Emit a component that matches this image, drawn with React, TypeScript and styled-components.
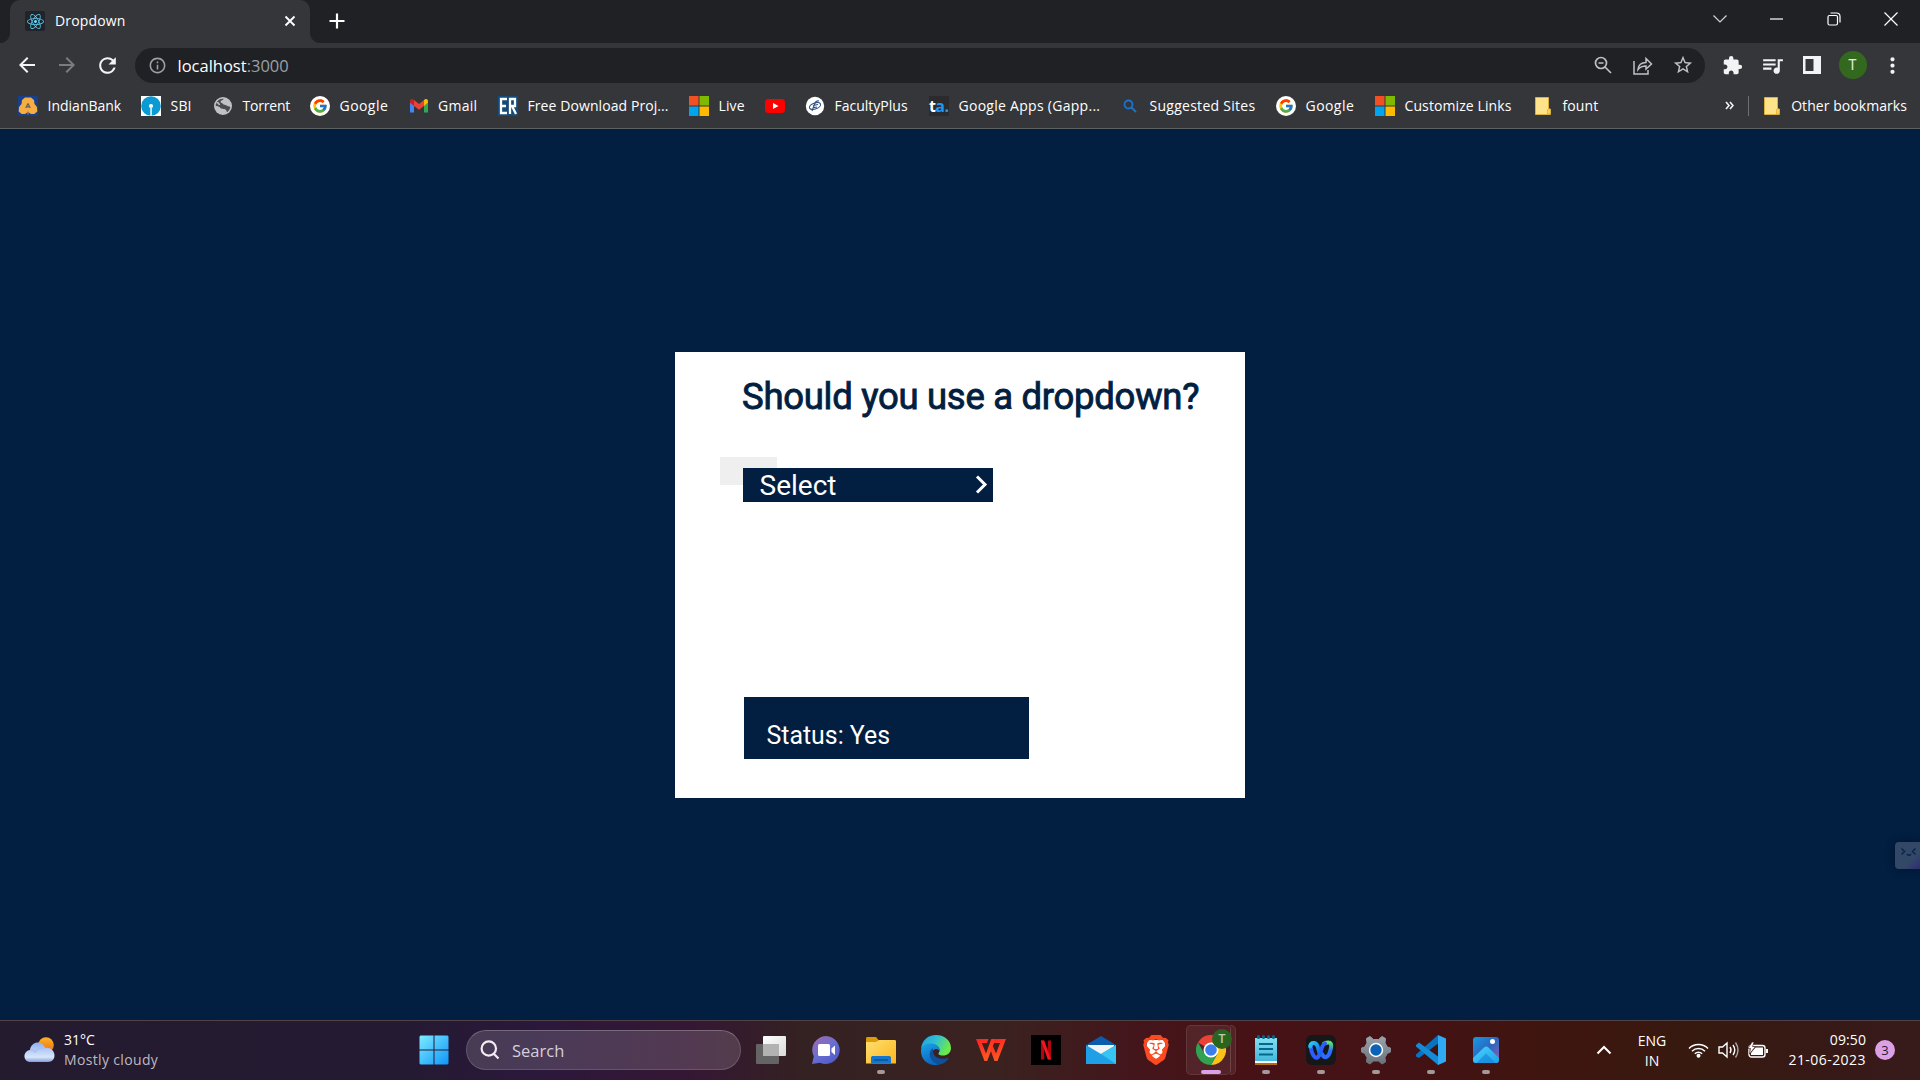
import React from "react";
import styled, { createGlobalStyle } from "styled-components";
import {
  MdArrowBack,
  MdArrowForward,
  MdRefresh,
  MdExtension,
  MdStarOutline,
  MdQueueMusic,
  MdMoreVert,
  MdInfoOutline,
} from "react-icons/md";
import { FcGoogle } from "react-icons/fc";
import { FaReact } from "react-icons/fa";
import { SiBrave } from "react-icons/si";

const ui = `"Segoe UI", "Open Sans", "Noto Sans", sans-serif`;
const navy = "#021e40";

const GlobalStyle = createGlobalStyle`
  *, *::before, *::after { box-sizing: border-box; }
  html, body { margin: 0; padding: 0; background: ${navy}; }
  body { overflow: hidden; }
  svg { display: block; flex: none; }
`;

const Screen = styled.div`
  width: 1920px;
  height: 1080px;
  display: flex;
  flex-direction: column;
  overflow: hidden;
  background: ${navy};
  font-family: ${ui};
`;

/* ---------- browser chrome ---------- */

const TabStrip = styled.header`
  height: 43px;
  flex: none;
  display: flex;
  background: #202124;
  padding-left: 10px;
`;

const Tab = styled.div`
  position: relative;
  width: 300px;
  height: 43px;
  display: flex;
  align-items: center;
  padding: 0 12px 1px 15px;
  gap: 10px;
  background: #35363a;
  border-radius: 10px 10px 0 0;
  color: #fff;
  &::before,
  &::after {
    content: "";
    position: absolute;
    bottom: 0;
    width: 10px;
    height: 10px;
  }
  &::before {
    left: -10px;
    background: radial-gradient(circle at 0 0, #202124 9.5px, #35363a 10.5px);
  }
  &::after {
    right: -10px;
    background: radial-gradient(circle at 100% 0, #202124 9.5px, #35363a 10.5px);
  }
`;

const Label = styled.span<{ $size?: number; $spacing?: number; $color?: string }>`
  font-size: ${(p) => p.$size ?? 14}px;
  letter-spacing: ${(p) => p.$spacing ?? 0}px;
  color: ${(p) => p.$color ?? "#fff"};
  line-height: 20px;
  white-space: nowrap;
`;

const TabTitle = styled(Label)`
  flex: 1;
`;

const Favicon = styled.span`
  width: 20px;
  height: 20px;
  display: grid;
  place-items: center;
  border-radius: 2px;
  background: #20232a;
  color: #61dafb;
`;

const CloseSlot = styled.span`
  width: 16px;
  display: grid;
  place-items: center;
`;

const NewTab = styled.span`
  width: 54px;
  display: grid;
  place-items: center;
  padding-bottom: 1px;
`;

const WindowControls = styled.div`
  margin-left: auto;
  margin-right: 1px;
  display: flex;
  height: 38px;
`;

const WindowButton = styled.span`
  width: 57px;
  display: grid;
  place-items: center;
`;

const Toolbar = styled.div`
  height: 43px;
  flex: none;
  display: flex;
  align-items: center;
  padding: 1px 8px 0 7px;
  background: #35363a;
`;

const NavButton = styled.span<{ $dim?: boolean }>`
  width: 40px;
  display: grid;
  place-items: center;
  color: ${(p) => (p.$dim ? "#7b7c80" : "#f1f3f4")};
`;

const Omnibox = styled.div`
  width: 1570px;
  height: 35px;
  margin-left: 8px;
  margin-right: 7px;
  border-radius: 18px;
  background: #202124;
  display: flex;
  align-items: center;
  padding: 0 2px 0 13px;
  color: #9aa0a6;
`;

const Url = styled.span`
  flex: 1;
  padding-left: 10.5px;
  padding-top: 1px;
  font-size: 16.5px;
  line-height: 24px;
  color: #9aa0a6;
  b {
    font-weight: 400;
    color: #fff;
  }
`;

const OmniAction = styled.span`
  width: 40px;
  display: grid;
  place-items: center;
  color: #bdc1c6;
`;

const Avatar = styled.span`
  width: 28px;
  height: 28px;
  margin-left: 1px;
  border-radius: 50%;
  display: grid;
  place-items: center;
  background: #33691e;
  color: #e3ebe0;
  font: 14px/28px Roboto, sans-serif;
`;

const Bookmarks = styled.nav`
  height: 43px;
  flex: none;
  display: flex;
  align-items: center;
  padding: 0 13px 3px 18px;
  background: #35363a;
  border-bottom: 1px solid #5f6064;
`;

const Bookmark = styled.span<{ $width?: number }>`
  width: ${(p) => (p.$width ? `${p.$width}px` : "auto")};
  display: flex;
  align-items: center;
  gap: 9.5px;
`;

const IconSlot = styled.span`
  width: 20px;
  height: 20px;
  flex: none;
  display: grid;
  place-items: center;
`;

const WhiteDisc = styled(IconSlot)`
  background: #fff;
  border-radius: 50%;
`;

const Overflow = styled.span`
  margin-left: auto;
  display: flex;
  align-items: center;
`;

const Divider = styled.i`
  width: 1px;
  height: 20px;
  margin: 0 13px 0 14px;
  background: #6f7074;
`;

/* ---------- page ---------- */

const Page = styled.main`
  position: relative;
  flex: 1;
  padding-top: 223px;
  background: ${navy};
`;

const Card = styled.section`
  width: 570px;
  height: 446px;
  margin-left: 675px;
  padding: 21px 0 0 45px;
  background: #fff;
  font-family: Roboto, sans-serif;
`;

const Heading = styled.h1`
  margin: 0 0 36px 22px;
  font-size: 36.5px;
  line-height: 48px;
  font-weight: 400;
  letter-spacing: -0.29px;
  -webkit-text-stroke: 0.9px ${navy};
  color: ${navy};
  white-space: nowrap;
`;

const ButtonStub = styled.div`
  width: 57px;
  height: 28px;
  padding: 11px 0 0 23px;
  background: #efefef;
`;

const SelectBox = styled.div`
  width: 250px;
  height: 34px;
  display: flex;
  align-items: center;
  justify-content: space-between;
  padding: 0 5px 0 16.5px;
  background: ${navy};
  color: #fff;
  font-size: 28px;
  line-height: 36px;
`;

const SelectText = styled.span`
  padding-top: 2px;
`;

const SelectArrow = styled.span`
  padding-bottom: 1px;
`;

const Status = styled.div`
  width: 285px;
  height: 62px;
  margin: 212px 0 0 24px;
  padding: 24px 0 0 22.5px;
  background: ${navy};
  color: #fff;
  font-size: 24.9px;
  line-height: 30px;
`;

const SideWidget = styled.div`
  position: absolute;
  right: 0;
  top: 713px;
  width: 25px;
  height: 27px;
  padding: 5px 0 0 5px;
  border-radius: 4px 0 0 4px;
  background: linear-gradient(135deg, #334867 65%, #2f2d73);
  box-shadow: 0 0 8px rgba(0, 10, 30, 0.4);
`;

/* ---------- taskbar ---------- */

const Taskbar = styled.footer`
  height: 60px;
  flex: none;
  display: flex;
  align-items: center;
  padding-bottom: 1px;
  border-top: 1px solid #514247;
  background: linear-gradient(
    90deg,
    #241b2f 0,
    #241a32 400px,
    #2b183b 540px,
    #351734 690px,
    #342122 800px,
    #3a2220 1000px,
    #43161c 1130px,
    #471216 1240px,
    #431214 1420px,
    #3f150f 1540px,
    #36190f 1700px,
    #371a1b 1920px
  );
`;

const Weather = styled.div`
  width: 406px;
  display: flex;
  align-items: center;
  gap: 9px;
  padding-left: 24px;
`;

const Stack = styled.div<{ $align?: string }>`
  display: flex;
  flex-direction: column;
  text-align: ${(p) => p.$align ?? "left"};
`;

const Slot = styled.div`
  position: relative;
  width: 55px;
  height: 58px;
  flex: none;
  display: grid;
  place-items: center;
`;

const Indicator = styled.i<{ $active?: boolean }>`
  position: absolute;
  bottom: 5px;
  left: 50%;
  width: ${(p) => (p.$active ? 20 : 8)}px;
  height: 4px;
  transform: translateX(-50%);
  border-radius: 2px;
  background: ${(p) => (p.$active ? "#dca0e6" : "#a5989a")};
`;

const SearchBox = styled.div`
  width: 275px;
  height: 40px;
  margin: 0 2px 0 5px;
  display: flex;
  align-items: center;
  gap: 12px;
  padding-left: 13px;
  border: 1px solid rgba(255, 255, 255, 0.14);
  border-top-color: rgba(255, 255, 255, 0.24);
  border-radius: 20px;
  background: rgba(255, 255, 255, 0.15);
`;

const SearchLabel = styled(Label)`
  padding-top: 2px;
`;

const ActiveSlot = styled(Slot)`
  &::before,
  &::after {
    content: "";
    position: absolute;
    top: 4px;
    height: 50px;
    border: 1px solid rgba(255, 255, 255, 0.09);
    border-radius: 5px;
    background: rgba(255, 255, 255, 0.07);
  }
  &::before {
    left: 3px;
    width: 45px;
  }
  &::after {
    left: 47px;
    width: 6px;
    border-left: 0;
    border-radius: 0 5px 5px 0;
  }
  > svg {
    position: relative;
  }
`;

const ProfileBadge = styled.span`
  position: absolute;
  z-index: 1;
  left: 29px;
  top: 8px;
  width: 20px;
  height: 20px;
  border-radius: 50%;
  background: #2b641e;
  color: #b9cdb3;
  text-align: center;
  font: 500 12px/20px Roboto, sans-serif;
`;

const Tray = styled.div`
  margin-left: auto;
  display: flex;
  align-items: center;
  padding-right: 25px;
`;

const Language = styled(Stack)`
  width: 50px;
  margin: 1px 11px 0 15px;
`;

const TrayIcons = styled.div`
  display: flex;
  align-items: center;
  gap: 9px;
`;

const Clock = styled(Stack)`
  width: 90px;
  margin-left: 8px;
`;

const Count = styled.span`
  width: 20px;
  height: 20px;
  margin-left: 9px;
  border-radius: 50%;
  background: #dca0e6;
  color: #2c1830;
  text-align: center;
  font-size: 13px;
  line-height: 20px;
`;

/* ---------- drawings ---------- */

const Lines = ({ d, w, h = w, sw = 1.4, color = "currentColor" }: { d: string; w: number; h?: number; sw?: number; color?: string }) => (
  <svg width={w} height={h} viewBox={`0 0 ${w} ${h}`} fill="none" stroke={color} strokeWidth={sw}>
    <path d={d} />
  </svg>
);

const IndianBankIcon = () => (
  <svg width="20" height="20" viewBox="0 0 20 20">
    <path d="M0 0h20v20H0z" fill="#173f8e" />
    <path d="M7 1.500h6l3 2.500.5 4 2.500 3 .3 4.500-3 2.500H13l-3-2-3 2H3.700l-3-2.500L1 11l2.500-3L4 4z" fill="#f5ae42" />
    <path d="M10 7.500l-2.200 4.500M10 7.500l2.200 4.500M9 10.800h2" fill="none" stroke="#6a5a5a" strokeWidth="1.200" />
    <path d="M10 18.500v-4" stroke="#c98d3a" strokeWidth="1" />
  </svg>
);

const SbiIcon = () => (
  <svg width="20" height="20" viewBox="0 0 20 20">
    <path d="M0 0h20v20H0z" fill="#fff" />
    <circle cx="10" cy="10" r="9.800" fill="#0a9bd3" />
    <circle cx="10" cy="10" r="2.100" fill="#fff" />
    <path d="M9.200 10h1.700v10H9.200z" fill="#d8f0fa" />
  </svg>
);

const GlobeIcon = () => (
  <svg width="20" height="20" viewBox="0 0 20 20">
    <circle cx="10" cy="10" r="9" fill="#bfc1c5" />
    <path d="M11 2.800c-1 1.500-3 1.200-3.500 3 0 1.500 2 1 2.500 2.200s2.500.5 3.500 1.500 2.500.5 3.800 1.500c-.3 2-1.500 4-3.300 5.200-.5-1.500-1-2.700-2.500-3.200-1.500-.3-3 .2-4-1-1.200-1.500-3-2-4.800-2C2.700 5.500 6.500 2 11 2.800z" fill="#4b4c50" />
    <path d="M3.500 6.500c1.500 0 2.500 1 3 2.500M5 14c2 0 3.500.5 5 3" fill="none" stroke="#bfc1c5" strokeWidth="1.500" />
  </svg>
);

const GmailIcon = () => (
  <svg width="20" height="20" viewBox="0 0 20 20">
    <path d="M1 5v11.500h4V9L1 5z" fill="#4285f4" />
    <path d="M19 5v11.500h-4V9l4-4z" fill="#34a853" />
    <path d="M1 6.500V5c0-1.800 2-2.500 3.200-1.500L5 4.100V10z" fill="#c5221f" />
    <path d="M19 6.500V5c0-1.800-2-2.500-3.200-1.500l-.8.6V10z" fill="#fbbc04" />
    <path d="M5 4.100l5 3.800 5-3.800V10l-5 3.800L5 10z" fill="#ea4335" />
  </svg>
);

const ErIcon = () => (
  <svg width="20" height="20" viewBox="0 0 20 20">
    <path d="M0 0h20v20H0z" fill="#164a78" />
    <path d="M9 3H3v14h6M3 10h5M12 18V3h5v7h-5M14 10l4 8" fill="none" stroke="#fff" strokeWidth="2.300" />
  </svg>
);

const MicrosoftIcon = () => (
  <svg width="20" height="20" viewBox="0 0 20 20">
    <path d="M0 0h9.500v9.500H0z" fill="#f25022" />
    <path d="M10.500 0H20v9.500h-9.500z" fill="#7fba00" />
    <path d="M0 10.500h9.500V20H0z" fill="#00a4ef" />
    <path d="M10.500 10.500H20V20h-9.500z" fill="#ffb900" />
  </svg>
);

const YoutubeIcon = () => (
  <svg width="20" height="20" viewBox="0 0 20 20">
    <rect y="3" width="20" height="14" rx="3.500" fill="#f00" />
    <path d="M8 7l5.500 3L8 13z" fill="#fff" />
  </svg>
);

const FacultyIcon = () => (
  <svg width="20" height="20" viewBox="0 0 20 20">
    <circle cx="10" cy="10" r="9.200" fill="#fff" />
    <g fill="none" stroke="#2d4f86" strokeWidth="1.100">
      <ellipse cx="10" cy="10" rx="5.800" ry="3" transform="rotate(-20 10 10)" />
      <path d="M7 15l3-8c.7-2 2-2.500 4-2M8 9.500l5-1M8 11.800l4-.8" />
    </g>
  </svg>
);

const TaTile = styled(IconSlot)`
  background: #2b2b2d;
  color: #fff;
  font: 700 16px/18px "Open Sans", sans-serif;
  letter-spacing: -0.6px;
  display: flex;
  span {
    color: #2196f3;
  }
`;

const FolderIcon = () => (
  <svg width="20" height="20" viewBox="0 0 20 20">
    <path d="M2.500 1.500h13V13h1.800v5.500H2.500z" fill="#ffe38a" stroke="#dcb13b" />
    <path d="M14.500 18v-4.500l1.500-.7 1.300.7V18z" fill="#ffd55c" stroke="#dcb13b" strokeWidth=".8" />
  </svg>
);

const CloudIcon = () => (
  <svg width="31" height="28" viewBox="0 0 31 28">
    <defs>
      <linearGradient id="sun" x2="0" y2="1"><stop stopColor="#fbb425" /><stop offset="1" stopColor="#ee6a16" /></linearGradient>
      <linearGradient id="cloud" x2="0" y2="1"><stop stopColor="#8fb0ee" /><stop offset=".75" stopColor="#d9e5fa" /><stop offset="1" stopColor="#7d9fdc" /></linearGradient>
    </defs>
    <circle cx="22" cy="9" r="7.800" fill="url(#sun)" />
    <path d="M6.500 26C-1.500 26-1.500 15 6 14 7 4.500 19 4 21 12c11-2 13 14 3 14z" fill="url(#cloud)" />
    <path d="M6 14c2-.5 4 .5 5 2 2-3 5-4.500 10-4" fill="none" stroke="#a8c1f1" strokeWidth="1.500" />
  </svg>
);

const StartIcon = () => (
  <svg width="30" height="30" viewBox="0 0 30 30">
    <defs>
      <linearGradient id="win" x2="1" y2="1"><stop stopColor="#7cecff" /><stop offset="1" stopColor="#0e94fa" /></linearGradient>
    </defs>
    <path fill="url(#win)" d="M1.500.5H14.500v14H.5V1.500zM15.500.5h13l1 1v13h-14zM.5 15.500h14v14h-13l-1-1zM15.500 15.500h14v13l-1 1h-13z" />
  </svg>
);

const TaskViewIcon = () => (
  <svg width="30" height="28" viewBox="0 0 30 28">
    <defs><linearGradient id="tv" x2="1" y2="1"><stop stopColor="#fff" /><stop offset="1" stopColor="#d9d9d9" /></linearGradient></defs>
    <rect y="8" width="23" height="20" rx="1" fill="#646464" />
    <rect x="7" width="23" height="20" rx="1" fill="url(#tv)" />
    <path d="M7 8h16v12H7z" fill="#b2b2b2" />
  </svg>
);

const ChatIcon = () => (
  <svg width="30" height="30" viewBox="0 0 30 30">
    <defs><linearGradient id="chat" x2=".8" y2="1"><stop stopColor="#a667a8" /><stop offset=".5" stopColor="#6c6fd0" /><stop offset="1" stopColor="#5059c9" /></linearGradient></defs>
    <path d="M15 1a14 14 0 1 1-6 26.800L1 29l1.800-7.500A14 14 0 0 1 15 1z" fill="url(#chat)" />
    <rect x="7" y="9" width="12" height="12" rx="1.500" fill="#fff" />
    <path d="M20.500 13.500L24 10.500v9.500l-3.500-3z" fill="#fff" />
  </svg>
);

const ExplorerIcon = () => (
  <svg width="30" height="30" viewBox="0 0 30 30">
    <defs><linearGradient id="folder" x2="1" y2="1"><stop stopColor="#ffdf72" /><stop offset="1" stopColor="#fcb51c" /></linearGradient></defs>
    <path d="M0 3.500C0 2.500.5 2 1.500 2H10l3 3.500V8H0z" fill="#dc9b07" />
    <path d="M0 7h10l3-2h15.500c1 0 1.500.5 1.500 1.500V28.500H0z" fill="url(#folder)" />
    <path d="M5 28.500V23c0-1.500 1-2 2-2h16c1 0 2 .5 2 2v5.500z" fill="#1476cd" />
    <path d="M8 25h14" stroke="#084b8e" strokeWidth="1.300" />
  </svg>
);

const EdgeIcon = () => (
  <svg width="30" height="30" viewBox="0 0 30 30">
    <defs>
      <linearGradient id="edgeTop" x2="1" y2=".4"><stop stopColor="#1f9fe0" /><stop offset=".5" stopColor="#30bed4" /><stop offset="1" stopColor="#6bea4a" /></linearGradient>
      <linearGradient id="edgeLeft" x2=".4" y2="1"><stop stopColor="#1ca4e8" /><stop offset="1" stopColor="#0a67c0" /></linearGradient>
    </defs>
    <path d="M0 14C1 5 7 0 15 0c9 0 15 6 15 13 0 5-4 7.500-8 7.500-4 0-5.500-1.500-4-3 1.500-2 .5-7-5-8C7 8.500 2 10 0 14z" fill="url(#edgeTop)" />
    <path d="M0 15C1 9 7 8 11 8.500c5 .5 8 4 7.500 7.500-2-4-8-2-8 4 0 5 3 8 8 9.500C8 32-.5 25 0 15z" fill="url(#edgeLeft)" />
    <path d="M12 13c-6 4-4 14 6 16.500 4 0 8-3 10-7-6 3-16 1-16-6.500 0-1 0-2 0-3z" fill="#0d509b" />
  </svg>
);

const WpsIcon = () => (
  <svg width="30" height="24" viewBox="0 0 30 24">
    <defs><linearGradient id="wps" x2=".4" y2="1"><stop stopColor="#ff1d22" /><stop offset="1" stopColor="#ff5a22" /></linearGradient></defs>
    <path d="M0 1h12.500l-1.500 4H5.800l4.200 10.500L15.200 1h4.300l-8.300 22H8.500z" fill="url(#wps)" />
    <path d="M19 1h11l-8.500 22h-3L14.500 12l2-5 3.500 8.500L24 5h-6.500z" fill="url(#wps)" />
  </svg>
);

const NetflixIcon = () => (
  <svg width="30" height="30" viewBox="0 0 30 30">
    <path d="M0 0h30v30H0z" />
    <path d="M10 5.500h3.200v19H10zM16.800 5.500H20v19h-3.200z" fill="#b1060f" />
    <path d="M10 5.500h3.200l6.800 19h-3.200z" fill="#f01822" />
  </svg>
);

const MailIcon = () => (
  <svg width="30" height="30" viewBox="0 0 30 30">
    <path d="M0 10L15 1l15 9v8H0z" fill="#0a5cad" />
    <path d="M2 10h26v10H2z" fill="#f3f3f3" />
    <path d="M0 10l15 9L30 10v19H0z" fill="#1f9fe6" />
    <path d="M30 10L15 19l15 10z" fill="#37c4f3" />
  </svg>
);

const BraveIcon = () => (
  <svg width="30" height="30" viewBox="0 0 30 30">
    <path d="M6 5h18l1 13-10 9-10-9z" fill="#fff" />
    <g color="#fb4a1f"><SiBrave size={30} /></g>
  </svg>
);

const ChromeIcon = () => (
  <svg width="30" height="30" viewBox="0 0 30 30">
    <path d="M15 15L2 7.500A15 15 0 0 1 28 7.500H15z" fill="#ea4335" />
    <path d="M15 15l6.500 3.800L15 30A15 15 0 0 0 28 7.500H15z" fill="#fbc116" />
    <path d="M2 7.500A15 15 0 0 0 15 30l6.500-11.200L15 15 8.500 18.800z" fill="#30a352" />
    <circle cx="15" cy="15" r="7.500" fill="#fff" />
    <circle cx="15" cy="15" r="5.800" fill="#3b7ded" />
  </svg>
);

const NotepadIcon = () => (
  <svg width="30" height="30" viewBox="0 0 30 30">
    <defs><linearGradient id="note" x2="0" y2="1"><stop stopColor="#84dff0" /><stop offset="1" stopColor="#42b8dc" /></linearGradient></defs>
    <path d="M4 25h22v5H4z" fill="#b66a13" />
    <path d="M4 3h22v25H4z" fill="#f8f8f8" />
    <path d="M4 3h22v23H4z" fill="url(#note)" />
    <path d="M8 9h14M8 14h14M8 19.500h14" stroke="#07678a" strokeWidth="1.800" />
    <path d="M7.500 1.500v1M12.500 1.500v1M17.500 1.500v1M22.500 1.500v1" stroke="#0b6587" strokeWidth="3" strokeLinecap="round" />
  </svg>
);

const WebexIcon = () => (
  <svg width="30" height="30" viewBox="0 0 30 30">
    <defs>
      <linearGradient id="wxl" x2="1" y2="1"><stop stopColor="#2ac8e8" /><stop offset="1" stopColor="#1c64f5" /></linearGradient>
      <linearGradient id="wxr" x2="0" y2="1"><stop stopColor="#57e36a" /><stop offset=".6" stopColor="#2b6dff" /></linearGradient>
    </defs>
    <rect width="30" height="30" rx="6" fill="#161718" />
    <g fill="none" strokeWidth="4" strokeLinecap="round">
      <path d="M18 8.500c8-3 8 1.500 6.500 6.500-2 8-6 9-8.500 4" stroke="url(#wxr)" />
      <path d="M4.500 11c1 8 4 13 7 11.500 4-3 3-12 7.500-14" stroke="#2f5cff" />
      <path d="M4.200 11.500c1-5 6-4 7.300-.5l2 7" stroke="url(#wxl)" />
    </g>
  </svg>
);

const SettingsIcon = () => (
  <svg width="30" height="30" viewBox="0 0 30 30">
    <defs><linearGradient id="gear" x2="0" y2="1"><stop stopColor="#9aa3ac" /><stop offset="1" stopColor="#69727b" /></linearGradient></defs>
    <path
      d="M9 1.500l3.500 3h5l3.500-3 3.500 2-.5 4.500 2.300 4 3.200 1v4l-3.200 1.500-2.300 4 .5 4.500-3.500 2-3.500-3h-5l-3.500 3-3.500-2 .5-4.500-2.300-4L.5 17v-4l3.200-1L6 8l-.5-4.500z"
      fill="url(#gear)"
      stroke="url(#gear)"
      strokeLinejoin="round"
    />
    <circle cx="15" cy="15" r="7.200" fill="#fff" />
    <circle cx="15" cy="15" r="5.700" fill="#0b62b6" />
  </svg>
);

const CodeIcon = () => (
  <svg width="30" height="30" viewBox="0 0 30 30">
    <path d="M0 19.500L22 0v8.500L3 23 0 21.500z" fill="#0873c0" />
    <path d="M0 10l3-2.500 19 14V30L0 11.500z" fill="#138bd6" />
    <path d="M22 0l8 3.500v23L22 30z" fill="#2eabf3" />
  </svg>
);

const PhotosIcon = () => (
  <svg width="26" height="26" viewBox="0 0 26 26">
    <defs>
      <linearGradient id="sky" x2="1" y2="1"><stop stopColor="#1699e6" /><stop offset=".5" stopColor="#2b67c0" /><stop offset="1" stopColor="#9a5cb0" /></linearGradient>
      <linearGradient id="hill" x2="1" y2="1"><stop stopColor="#49d3fb" /><stop offset="1" stopColor="#1ea0e8" /></linearGradient>
    </defs>
    <rect width="26" height="26" rx="3" fill="url(#sky)" />
    <path d="M0 21L11 10.500c1.500-1.500 3-1.500 4.500 0L26 21v2c0 2-1 3-3 3H3c-2 0-3-1-3-3z" fill="url(#hill)" />
    <path d="M13 16.500l9.500 9.500H3.500z" fill="#1280d8" opacity=".6" />
    <circle cx="19.500" cy="4.500" r="2.500" fill="#fff" />
  </svg>
);

const WifiIcon = () => (
  <svg width="21" height="16" viewBox="0 0 21 16" fill="none" stroke="#fff" strokeWidth="1.500">
    <path d="M1 6.500a13.500 13.500 0 0 1 19 0M4 9.200a9.400 9.400 0 0 1 13 0M6.800 11.800a5.500 5.500 0 0 1 7.400 0" />
    <circle cx="10.500" cy="13.700" r="2" fill="#fff" stroke="none" />
  </svg>
);

const VolumeIcon = () => (
  <svg width="21" height="18" viewBox="0 0 21 18" fill="none" stroke="#fff" strokeWidth="1.400">
    <path d="M1 6h3.500L9 2v14l-4.500-4H1zM12 6q2 3 0 6M15 4q3.500 5 0 10" />
    <path d="M17.500 1.500q5 7.500 0 15" opacity=".6" />
  </svg>
);

const BatteryIcon = () => (
  <svg width="20" height="17" viewBox="0 0 20 17">
    <rect x="1" y="3.500" width="16" height="11.500" rx="2.500" fill="none" stroke="#fff" strokeWidth="1.400" />
    <path d="M7.500 5.500H15V13H3v-2zM18 7h2v4h-2z" fill="#fff" />
    <path d="M4 0L0 6.500h2.500L1.500 12 7.500 4.500H4.500L6 0z" fill="#fff" stroke="#371a14" strokeWidth=".6" />
  </svg>
);

const SideFace = () => (
  <svg width="18" height="12" viewBox="0 0 18 12" fill="none" stroke="#09254b" strokeWidth="1.500">
    <path d="M1.500 1.500l3 3-3 3M15.500 1.500l-3 3 3 3M7 7q2 2.500 4 0" />
  </svg>
);

/* ---------- data ---------- */

const bookmarks: { icon: React.ReactNode; text?: string; width: number; spacing?: number }[] = [
  { icon: <IconSlot><IndianBankIcon /></IconSlot>, text: "IndianBank", width: 123 },
  { icon: <IconSlot><SbiIcon /></IconSlot>, text: "SBI", width: 72, spacing: 0.2 },
  { icon: <IconSlot><GlobeIcon /></IconSlot>, text: "Torrent", width: 97, spacing: -0.2 },
  { icon: <WhiteDisc><FcGoogle size={16} /></WhiteDisc>, text: "Google", width: 98.5, spacing: 0.45 },
  { icon: <IconSlot><GmailIcon /></IconSlot>, text: "Gmail", width: 89.5, spacing: 0.25 },
  { icon: <IconSlot><ErIcon /></IconSlot>, text: "Free Download Proj...", width: 191, spacing: 0.08 },
  { icon: <IconSlot><MicrosoftIcon /></IconSlot>, text: "Live", width: 76, spacing: 0.1 },
  { icon: <IconSlot><YoutubeIcon /></IconSlot>, width: 40 },
  { icon: <IconSlot><FacultyIcon /></IconSlot>, text: "FacultyPlus", width: 124 },
  { icon: <TaTile>t<span>a.</span></TaTile>, text: "Google Apps (Gapp...", width: 191, spacing: 0.28 },
  { icon: <IconSlot><Lines w={14} sw={1.8} color="#1775d1" d="M9.500 5.500a4 4 0 1 1-8 0a4 4 0 1 1 8 0M8.500 8.500l4.500 4.500" /></IconSlot>, text: "Suggested Sites", width: 156, spacing: 0.27 },
  { icon: <WhiteDisc><FcGoogle size={16} /></WhiteDisc>, text: "Google", width: 99, spacing: 0.45 },
  { icon: <IconSlot><MicrosoftIcon /></IconSlot>, text: "Customize Links", width: 158, spacing: 0.1 },
  { icon: <IconSlot><FolderIcon /></IconSlot>, text: "fount", width: 80, spacing: 0.1 },
];

const apps: { icon: React.ReactNode; running?: boolean; chrome?: boolean }[] = [
  { icon: <TaskViewIcon /> },
  { icon: <ChatIcon /> },
  { icon: <ExplorerIcon />, running: true },
  { icon: <EdgeIcon /> },
  { icon: <WpsIcon /> },
  { icon: <NetflixIcon /> },
  { icon: <MailIcon /> },
  { icon: <BraveIcon /> },
  { icon: <ChromeIcon />, chrome: true },
  { icon: <NotepadIcon />, running: true },
  { icon: <WebexIcon />, running: true },
  { icon: <SettingsIcon />, running: true },
  { icon: <CodeIcon />, running: true },
  { icon: <PhotosIcon />, running: true },
];

export default function App() {
  return (
    <Screen>
      <GlobalStyle />
      <TabStrip>
        <Tab>
          <Favicon><FaReact size={17} /></Favicon>
          <TabTitle $spacing={0.15}>Dropdown</TabTitle>
          <CloseSlot><Lines w={12} sw={1.9} color="#fff" d="M1.500 1.500l9 9M10.500 1.500l-9 9" /></CloseSlot>
        </Tab>
        <NewTab><Lines w={16} sw={2.2} color="#fff" d="M8 .5v15M.5 8h15" /></NewTab>
        <WindowControls>
          <WindowButton><Lines w={14} h={8} sw={1.2} color="#d5d5d6" d="M.5 .5l6.500 6.500 6.500-6.500" /></WindowButton>
          <WindowButton><Lines w={13} h={2} sw={1.2} color="#fff" d="M0 1h13" /></WindowButton>
          <WindowButton><Lines w={14} sw={1.2} color="#fff" d="M2.500 3.500h6.500q1.500 0 1.500 1.500v6.500q0 1.500-1.500 1.500H2.500q-1.500 0-1.500-1.500V5q0-1.500 1.500-1.500zM3.500 1h6q3.500 0 3.500 3.500v6" /></WindowButton>
          <WindowButton><Lines w={14} sw={1.2} color="#fff" d="M.5 .5l13 13M13.500 .5l-13 13" /></WindowButton>
        </WindowControls>
      </TabStrip>
      <Toolbar>
        <NavButton><MdArrowBack size={24} /></NavButton>
        <NavButton $dim><MdArrowForward size={24} /></NavButton>
        <NavButton><MdRefresh size={25} /></NavButton>
        <Omnibox>
          <MdInfoOutline size={19} />
          <Url><b>localhost</b>:3000</Url>
          <OmniAction>
            <Lines w={18} sw={1.7} d="M12.500 7a5.500 5.500 0 1 1-11 0a5.500 5.500 0 1 1 11 0M11 11l6 6M4.500 7h5" />
          </OmniAction>
          <OmniAction>
            <Lines w={20} h={19} sw={1.5} d="M1 5v13h14v-4M5 13.500c.5-5 4-7 8-7V2.500l5.500 5.500-5.500 5V10c-4 0-6 1-8 3.500z" />
          </OmniAction>
          <OmniAction><MdStarOutline size={22} /></OmniAction>
        </Omnibox>
        <NavButton><MdExtension size={21} /></NavButton>
        <NavButton><MdQueueMusic size={25} /></NavButton>
        <NavButton>
          <svg width="18" height="18" viewBox="0 0 18 18">
            <path fill="#f1f3f4" fillRule="evenodd" d="M0 0h18v18H0zM2.500 3v12h8V3z" />
          </svg>
        </NavButton>
        <NavButton><Avatar>T</Avatar></NavButton>
        <NavButton><MdMoreVert size={25} /></NavButton>
      </Toolbar>
      <Bookmarks>
        {bookmarks.map((b, i) => (
          <Bookmark key={i} $width={b.width}>
            {b.icon}
            {b.text && <Label $spacing={b.spacing}>{b.text}</Label>}
          </Bookmark>
        ))}
        <Overflow>
          <Lines w={9} h={9} sw={1.6} color="#f1f3f4" d="M1 1l3 3.500-3 3.500M5 1l3 3.500-3 3.500" />
          <Divider />
          <Bookmark><IconSlot><FolderIcon /></IconSlot><Label $spacing={0.06}>Other bookmarks</Label></Bookmark>
        </Overflow>
      </Bookmarks>
      <Page>
        <Card>
          <Heading>Should you use a dropdown?</Heading>
          <ButtonStub>
            <SelectBox>
              <SelectText>Select</SelectText>
              <SelectArrow><Lines w={13} h={19} sw={3} color="#fff" d="M2 1.500l8 8-8 8" /></SelectArrow>
            </SelectBox>
          </ButtonStub>
          <Status>Status: Yes</Status>
        </Card>
        <SideWidget><SideFace /></SideWidget>
      </Page>
      <Taskbar>
        <Weather>
          <CloudIcon />
          <Stack>
            <Label>31°C</Label>
            <Label $color="#bdb9c0" $spacing={0.35}>Mostly cloudy</Label>
          </Stack>
        </Weather>
        <Slot><StartIcon /></Slot>
        <SearchBox>
          <Lines w={20} sw={2.2} color="#f0ecf2" d="M16 8.500a7.200 7.200 0 1 1-14.400 0a7.200 7.200 0 1 1 14.400 0M13.500 13.500l5 5" />
          <SearchLabel $size={16.5} $color="#d6cfd8">Search</SearchLabel>
        </SearchBox>
        {apps.map((a, i) =>
          a.chrome ? (
            <ActiveSlot key={i}>
              {a.icon}
              <ProfileBadge>T</ProfileBadge>
              <Indicator $active />
            </ActiveSlot>
          ) : (
            <Slot key={i}>
              {a.icon}
              {a.running && <Indicator />}
            </Slot>
          ),
        )}
        <Tray>
          <Lines w={16} h={10} sw={2} color="#fff" d="M1.500 8.500L8 2l6.500 6.500" />
          <Language $align="center">
            <Label>ENG</Label>
            <Label>IN</Label>
          </Language>
          <TrayIcons>
            <WifiIcon />
            <VolumeIcon />
            <BatteryIcon />
          </TrayIcons>
          <Clock $align="right">
            <Label $spacing={0.1}>09:50</Label>
            <Label $spacing={0.45}>21-06-2023</Label>
          </Clock>
          <Count>3</Count>
        </Tray>
      </Taskbar>
    </Screen>
  );
}
